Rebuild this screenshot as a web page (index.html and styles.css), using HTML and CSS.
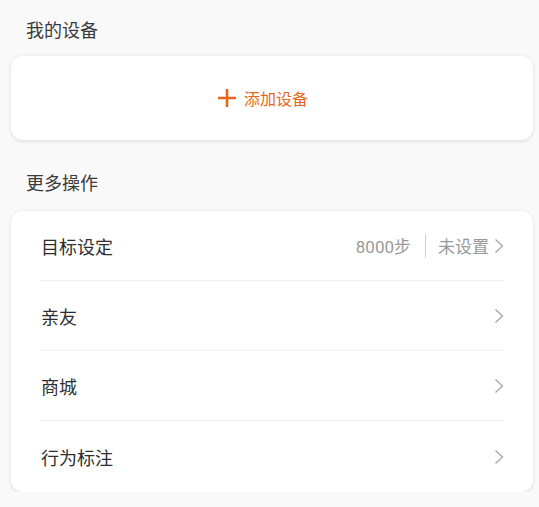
FILE: index.html
```html
<!DOCTYPE html>
<html lang="zh-CN">
<head>
    <meta charset="UTF-8">
    <meta name="viewport" content="width=device-width, initial-scale=1.0">
    <title>我的设备</title>
    <link rel="stylesheet" href="styles.css">
</head>
<body>
    <div class="section-title first">我的设备</div>
    <div class="card add-card">
        <div class="add-btn">
            <svg class="plus" width="18" height="18" viewBox="0 0 18 18">
                <path d="M9 0v18M0 9h18" stroke="#e8661a" stroke-width="2.6" fill="none"/>
            </svg>
            <span>添加设备</span>
        </div>
    </div>

    <div class="section-title second">更多操作</div>
    <div class="card list-card">
        <div class="row">
            <span class="row-label">目标设定</span>
            <span class="row-value">8000步</span>
            <span class="row-sep"></span>
            <span class="row-value">未设置</span>
            <svg class="chevron" width="10" height="16" viewBox="0 0 10 16">
                <polyline points="1.5,1.5 8.5,8 1.5,14.5" stroke="#a8a8a8" stroke-width="1.4" fill="none"/>
            </svg>
        </div>
        <div class="row">
            <span class="row-label">亲友</span>
            <svg class="chevron" width="10" height="16" viewBox="0 0 10 16">
                <polyline points="1.5,1.5 8.5,8 1.5,14.5" stroke="#a8a8a8" stroke-width="1.4" fill="none"/>
            </svg>
        </div>
        <div class="row">
            <span class="row-label">商城</span>
            <svg class="chevron" width="10" height="16" viewBox="0 0 10 16">
                <polyline points="1.5,1.5 8.5,8 1.5,14.5" stroke="#a8a8a8" stroke-width="1.4" fill="none"/>
            </svg>
        </div>
        <div class="row last">
            <span class="row-label">行为标注</span>
            <svg class="chevron" width="10" height="16" viewBox="0 0 10 16">
                <polyline points="1.5,1.5 8.5,8 1.5,14.5" stroke="#a8a8a8" stroke-width="1.4" fill="none"/>
            </svg>
        </div>
    </div>
</body>
</html>
```

FILE: styles.css
```css
body {
    font-family: Roboto, "Noto Sans CJK SC", sans-serif;
    margin: 0;
    padding: 0;
    background-color: #f9f9f9;
    color: #333;
}
.section-title {
    font-size: 18px;
    line-height: 24px;
    padding: 0 26px;
    color: #3a3a3a;
}
.section-title.first {
    padding-top: 19px;
    padding-bottom: 13px;
}
.section-title.second {
    padding-top: 32px;
    padding-bottom: 15px;
}
.card {
    background-color: #fff;
    border-radius: 12px;
    box-shadow: 0 1px 4px rgba(0, 0, 0, 0.13);
    margin: 0 6px 0 11px;
}
.add-card {
    height: 84px;
    display: flex;
    justify-content: center;
    align-items: center;
}
.add-btn {
    display: flex;
    align-items: center;
    gap: 8px;
    margin-right: 18px;
    color: #e8661a;
    font-size: 16px;
}
.list-card {
    padding: 0 29px;
}
.row {
    display: flex;
    align-items: center;
    height: 70px;
    border-bottom: 1px solid #f0f0f0;
    box-sizing: border-box;
}
.row.last {
    height: 71px;
    border-bottom: none;
}
.row-label {
    flex: 1;
    font-size: 18px;
    color: #2e2e2e;
    padding-left: 1px;
}
.row-value {
    font-size: 17px;
    color: #999;
}
.row-sep {
    width: 1px;
    height: 24px;
    background-color: #d0d0d0;
    margin: 0 12px 0 14px;
}
.chevron {
    margin-left: 5px;
}
```
